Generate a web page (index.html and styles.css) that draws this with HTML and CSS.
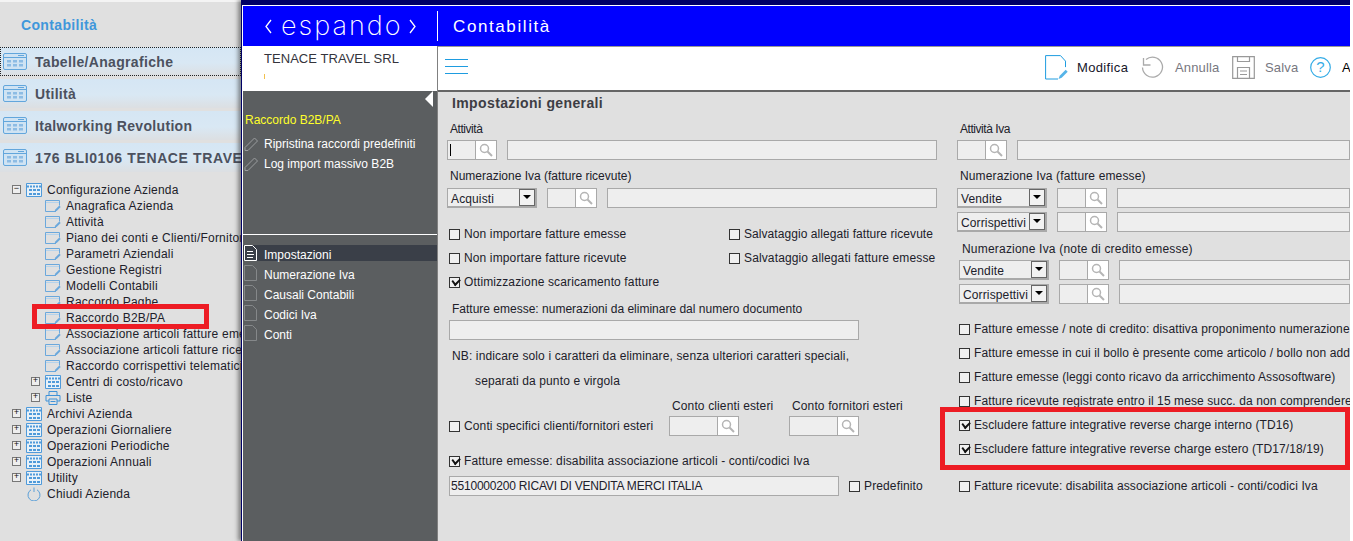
FILE: index.html
```html
<!DOCTYPE html>
<html lang="it">
<head>
<meta charset="utf-8">
<title>Contabilità</title>
<link rel="stylesheet" href="styles.css">
</head>
<body>
<svg class="sprites" width="0" height="0" aria-hidden="true">
  <symbol id="i-app" viewBox="0 0 24 17"><rect x=".5" y=".5" width="23" height="16" rx="1.5" fill="#cfe3f3" stroke="#62a6dc"/><path d="M1 4.500h22" stroke="#62a6dc"/><path d="M15 2.500h6" stroke="#62a6dc"/><g fill="#8dbce4"><rect x="4" y="7" width="4" height="2.500"/><rect x="10" y="7" width="4" height="2.500"/><rect x="16" y="7" width="4" height="2.500"/><rect x="4" y="11" width="4" height="2.500"/><rect x="10" y="11" width="4" height="2.500"/><rect x="16" y="11" width="4" height="2.500"/></g></symbol>
  <symbol id="i-grid" viewBox="0 0 16 14"><path d="M.5 13.500v-13h15v13z" fill="#e8f1f8" stroke="#4f9ada"/><path d="M1 3.500h14" stroke="#4f9ada" stroke-width="2" stroke-dasharray="2 1"/><g fill="#4f9ada"><rect x="3" y="6" width="3" height="2"/><rect x="7" y="6" width="3" height="2"/><rect x="11" y="6" width="3" height="2"/><rect x="3" y="10" width="3" height="2"/><rect x="7" y="10" width="3" height="2"/><rect x="11" y="10" width="3" height="2"/></g></symbol>
  <symbol id="i-form" viewBox="0 0 16 12"><path d="M11 11.500H.5V.5h14v5" fill="none" stroke="#6ba8dc"/><path d="M1 2.500h13" stroke="#b5d3ec"/><path d="M9.500 11.500l.8-2 4-4 1.400 1.400-4 4z" fill="#6ba8dc"/></symbol>
  <symbol id="i-print" viewBox="0 0 15 14"><path d="M3.500 4V.5h8V4M3.500 10H.5V4.500h14V10h-3" fill="none" stroke="#3f92d8"/><path d="M3.500 8h8v5.500h-8z" fill="none" stroke="#3f92d8"/><path d="M5 10.500h5" stroke="#3f92d8"/></symbol>
  <symbol id="i-power" viewBox="0 0 14 14"><path d="M4 2.800a6 6 0 1 0 6 0" fill="none" stroke="#5a9fd8"/><path d="M7 .5v4.500" stroke="#5a9fd8"/></symbol>
  <symbol id="i-pencil" viewBox="0 0 15 15"><path d="M1 11L10.500 1.500 13.500 4.500 4 14 1 14z" fill="none" stroke="#9a9c9e"/></symbol>
  <symbol id="i-doc" viewBox="0 0 13 16"><path d="M.5 15.500V.5h8l4 4v11" fill="none" stroke="#85888a"/><path d="M.5 15.500h12" stroke="#85888a"/></symbol>
  <symbol id="i-doc-on" viewBox="0 0 13 16"><path d="M.5 15.500V.5h8l4 4v11z" fill="none" stroke="#fff"/><path d="M3 6.500h6M3 9.500h7M3 12.500h6" stroke="#fff"/></symbol>
  <symbol id="i-search" viewBox="0 0 14 14"><circle cx="5.500" cy="5.500" r="4" fill="none" stroke="#b5b5b5" stroke-width="1.500"/><path d="M8.500 8.500l4.500 4.500" stroke="#b5b5b5" stroke-width="2"/></symbol>
  <symbol id="i-edit" viewBox="0 0 23 25"><path d="M13 24H.6V.6h14.900l5 5.500v6" fill="none" stroke="#1e9ce0"/><path d="M13.500 24l1.200-3.200 6-6 2 2-6 6z" fill="#56b4e8"/></symbol>
  <symbol id="i-undo" viewBox="0 0 23 23"><path d="M5 3.500A10 10 0 1 1 1.500 11.500" fill="none" stroke="#aaa" stroke-width="1.300"/><path d="M2.500 2v7h7" fill="none" stroke="#aaa" stroke-width="1.300"/></symbol>
  <symbol id="i-save" viewBox="0 0 23 23"><path d="M.7.700h21.600v21.600H.7zM5.500 1v4.500h12V1M5.500 22V11.500h12V22M8 15h7M8 18.500h7" fill="none" stroke="#999" stroke-width="1.200"/></symbol>
</svg>
<div class="app">
  <aside class="nav">
    <h1 class="nav-title">Contabilità</h1>
    <div class="acc acc-focus"><svg class="acc-icon"><use href="#i-app"/></svg><span>Tabelle/Anagrafiche</span></div>
    <div class="acc"><svg class="acc-icon"><use href="#i-app"/></svg><span>Utilità</span></div>
    <div class="acc"><svg class="acc-icon"><use href="#i-app"/></svg><span>Italworking Revolution</span></div>
    <div class="acc acc-long"><svg class="acc-icon"><use href="#i-app"/></svg><span>176 BLI0106 TENACE TRAVEL SRL</span></div>
    <ul class="tree">
      <li class="t0"><i class="tog">−</i><svg class="ti"><use href="#i-grid"/></svg>Configurazione Azienda</li>
      <li class="t1"><svg class="ti"><use href="#i-form"/></svg>Anagrafica Azienda</li>
      <li class="t1"><svg class="ti"><use href="#i-form"/></svg>Attività</li>
      <li class="t1"><svg class="ti"><use href="#i-form"/></svg>Piano dei conti e Clienti/Fornitori</li>
      <li class="t1"><svg class="ti"><use href="#i-form"/></svg>Parametri Aziendali</li>
      <li class="t1"><svg class="ti"><use href="#i-form"/></svg>Gestione Registri</li>
      <li class="t1"><svg class="ti"><use href="#i-form"/></svg>Modelli Contabili</li>
      <li class="t1"><svg class="ti"><use href="#i-form"/></svg>Raccordo Paghe</li>
      <li class="t1"><svg class="ti"><use href="#i-form"/></svg>Raccordo B2B/PA</li>
      <li class="t1"><svg class="ti"><use href="#i-form"/></svg>Associazione articoli fatture emesse</li>
      <li class="t1"><svg class="ti"><use href="#i-form"/></svg>Associazione articoli fatture ricevute</li>
      <li class="t1"><svg class="ti"><use href="#i-form"/></svg>Raccordo corrispettivi telematici</li>
      <li class="t1 tp"><i class="tog">+</i><svg class="ti"><use href="#i-grid"/></svg>Centri di costo/ricavo</li>
      <li class="t1 tp"><i class="tog">+</i><svg class="ti"><use href="#i-print"/></svg>Liste</li>
      <li class="t0"><i class="tog">+</i><svg class="ti"><use href="#i-grid"/></svg>Archivi Azienda</li>
      <li class="t0"><i class="tog">+</i><svg class="ti"><use href="#i-grid"/></svg>Operazioni Giornaliere</li>
      <li class="t0"><i class="tog">+</i><svg class="ti"><use href="#i-grid"/></svg>Operazioni Periodiche</li>
      <li class="t0"><i class="tog">+</i><svg class="ti"><use href="#i-grid"/></svg>Operazioni Annuali</li>
      <li class="t0"><i class="tog">+</i><svg class="ti"><use href="#i-grid"/></svg>Utility</li>
      <li class="t0 tn"><svg class="ti"><use href="#i-power"/></svg>Chiudi Azienda</li>
    </ul>
    <div class="mark mark-nav"></div>
  </aside>

  <section class="win">
    <header class="brand">
      <div class="logo">
        <svg class="chev" viewBox="0 0 7 15"><path d="M6 1L1 7.500 6 14" fill="none" stroke="#fff" stroke-width="1.300"/></svg>
        <span class="logo-text">espando</span>
        <svg class="chev" viewBox="0 0 7 15"><path d="M1 1l5 6.500L1 14" fill="none" stroke="#fff" stroke-width="1.300"/></svg>
      </div>
      <div class="brand-title">Contabilità</div>
    </header>
    <div class="work">
      <aside class="panel">
        <div class="company"><span>TENACE TRAVEL SRL</span><i class="tick"></i></div>
        <div class="panel-top">
          <i class="collapse"></i>
          <div class="panel-head">Raccordo B2B/PA</div>
          <div class="pitem"><svg class="pi"><use href="#i-pencil"/></svg>Ripristina raccordi predefiniti</div>
          <div class="pitem"><svg class="pi"><use href="#i-pencil"/></svg>Log import massivo B2B</div>
        </div>
        <div class="panel-list">
          <div class="pitem on"><svg class="pi pd"><use href="#i-doc-on"/></svg>Impostazioni</div>
          <div class="pitem"><svg class="pi pd"><use href="#i-doc"/></svg>Numerazione Iva</div>
          <div class="pitem"><svg class="pi pd"><use href="#i-doc"/></svg>Causali Contabili</div>
          <div class="pitem"><svg class="pi pd"><use href="#i-doc"/></svg>Codici Iva</div>
          <div class="pitem"><svg class="pi pd"><use href="#i-doc"/></svg>Conti</div>
        </div>
      </aside>
      <main class="main">
        <div class="toolbar">
          <div class="burger"><i></i><i></i><i></i></div>
          <div class="tools">
            <div class="tool"><svg class="tool-i"><use href="#i-edit"/></svg><span>Modifica</span></div>
            <div class="tool off"><svg class="tool-i"><use href="#i-undo"/></svg><span>Annulla</span></div>
            <div class="tool off"><svg class="tool-i"><use href="#i-save"/></svg><span>Salva</span></div>
            <div class="tool help"><svg class="help-i" viewBox="0 0 21 21"><circle cx="10.500" cy="10.500" r="9.800" fill="none" stroke="#35ace6" stroke-width="1.200"/><text x="10.500" y="15" text-anchor="middle" class="help-q">?</text></svg><span>Aiuto</span></div>
          </div>
        </div>
        <div class="form">
          <div class="col col-l">
            <h2 class="sect">Impostazioni generali</h2>
            <div class="lbl m7 in1 tight">Attività</div>
            <div class="fld m3 inm2">
              <div class="srch"><div class="sv caret"><i></i></div><div class="sb"><svg><use href="#i-search"/></svg></div></div>
              <div class="wide w430"></div>
            </div>
            <div class="lbl m8 in1 ls0">Numerazione Iva (fatture ricevute)</div>
            <div class="fld m4 inm2">
              <div class="sel"><span>Acquisti</span><b></b></div>
              <div class="srch"><div class="sv"></div><div class="sb"><svg><use href="#i-search"/></svg></div></div>
              <div class="wide w330"></div>
            </div>
            <div class="checks m14">
              <div class="line"><label class="ck ckw"><i class="cb"></i>Non importare fatture emesse</label><label class="ck ls1"><i class="cb"></i>Salvataggio allegati fatture ricevute</label></div>
              <div class="line"><label class="ck ckw"><i class="cb"></i>Non importare fatture ricevute</label><label class="ck"><i class="cb"></i>Salvataggio allegati fatture emesse</label></div>
              <div class="line"><label class="ck"><i class="cb on"></i>Ottimizzazione scaricamento fatture</label></div>
            </div>
            <div class="lbl m7 in3 ls0">Fatture emesse: numerazioni da eliminare dal numero documento</div>
            <div class="wide w410 m3"></div>
            <div class="lbl m8 in3">NB: indicare solo i caratteri da eliminare, senza ulteriori caratteri speciali,</div>
            <div class="lbl m9 in26">separati da punto e virgola</div>
            <div class="lbl-pair m9"><span>Conto clienti esteri</span><span>Conto fornitori esteri</span></div>
            <div class="fld m2 conti">
              <label class="ck cke"><i class="cb"></i>Conti specifici clienti/fornitori esteri</label>
              <div class="srch s70"><div class="sv"></div><div class="sb"><svg><use href="#i-search"/></svg></div></div>
              <div class="srch s70"><div class="sv"></div><div class="sb"><svg><use href="#i-search"/></svg></div></div>
            </div>
            <div class="line m13"><label class="ck"><i class="cb on"></i>Fatture emesse: disabilita associazione articoli - conti/codici Iva</label></div>
            <div class="fld m3">
              <div class="wide w390 val">5510000200 RICAVI DI VENDITA MERCI ITALIA</div>
              <label class="ck"><i class="cb"></i>Predefinito</label>
            </div>
          </div>
          <div class="col col-r">
            <div class="sect-sp"></div>
            <div class="lbl m7 in3 tight">Attività Iva</div>
            <div class="fld m3">
              <div class="srch"><div class="sv"></div><div class="sb"><svg><use href="#i-search"/></svg></div></div>
              <div class="wide grow"></div>
            </div>
            <div class="lbl m8 in3">Numerazione Iva (fatture emesse)</div>
            <div class="fld m4">
              <div class="sel"><span>Vendite</span><b></b></div>
              <div class="srch"><div class="sv"></div><div class="sb"><svg><use href="#i-search"/></svg></div></div>
              <div class="wide grow"></div>
            </div>
            <div class="fld m4">
              <div class="sel"><span>Corrispettivi</span><b></b></div>
              <div class="srch"><div class="sv"></div><div class="sb"><svg><use href="#i-search"/></svg></div></div>
              <div class="wide grow"></div>
            </div>
            <div class="lbl m9 in5 wider">Numerazione Iva (note di credito emesse)</div>
            <div class="fld m3 in2">
              <div class="sel"><span>Vendite</span><b></b></div>
              <div class="srch"><div class="sv"></div><div class="sb"><svg><use href="#i-search"/></svg></div></div>
              <div class="wide grow"></div>
            </div>
            <div class="fld m4 in2">
              <div class="sel"><span>Corrispettivi</span><b></b></div>
              <div class="srch"><div class="sv"></div><div class="sb"><svg><use href="#i-search"/></svg></div></div>
              <div class="wide grow"></div>
            </div>
            <div class="checks checks-r m13 in2">
              <div class="line"><label class="ck"><i class="cb"></i>Fatture emesse / note di credito: disattiva proponimento numerazione documento</label></div>
              <div class="line"><label class="ck"><i class="cb"></i>Fatture emesse in cui il bollo è presente come articolo / bollo non addebitato</label></div>
              <div class="line"><label class="ck"><i class="cb"></i>Fatture emesse (leggi conto ricavo da arricchimento Assosoftware)</label></div>
              <div class="line"><label class="ck"><i class="cb"></i>Fatture ricevute registrate entro il 15 mese succ. da non comprendere nel periodo</label></div>
              <div class="line"><label class="ck"><i class="cb on"></i>Escludere fatture integrative reverse charge interno (TD16)</label></div>
              <div class="line"><label class="ck"><i class="cb on"></i>Escludere fatture integrative reverse charge estero (TD17/18/19)</label></div>
              <div class="line m13"><label class="ck"><i class="cb"></i>Fatture ricevute: disabilita associazione articoli - conti/codici Iva</label></div>
            </div>
          </div>
        </div>
      </main>
    </div>
  </section>
  <div class="mark mark-form"></div>
</div>
</body>
</html>
```
FILE: styles.css
```css
* { box-sizing: border-box; }
html, body { margin: 0; padding: 0; background: #fff; overflow: hidden; }
body { font: 12px/16px "Liberation Sans", Arial, sans-serif; color: #20202a; }
.sprites { position: absolute; }
.app { position: relative; display: flex; width: 1350px; height: 541px; overflow: hidden; }

/* left navigation */
.nav { position: relative; flex: 0 0 241px; width: 241px; height: 541px; overflow: hidden; background: #e0e0e0; border-top: 2px solid #f4f4f4; }
.nav-title { margin: 0 0 0 21px; height: 45px; font-size: 14px; font-weight: bold; line-height: 46px; color: #3f97db; letter-spacing: .35px; }
.acc { display: flex; align-items: center; gap: 8px; height: 29px; margin-bottom: 3px; padding-left: 3px; font-size: 14px; font-weight: bold; white-space: nowrap; color: #4c515e; letter-spacing: .33px; background: linear-gradient(#d5e6f4, #d9e8f4 55%, #dcdfe2); }
.acc-long { letter-spacing: .62px; }
.acc-focus { outline: 1px dotted #222; outline-offset: -1px; }
.acc-icon { flex: none; width: 24px; height: 17px; }
.tree { list-style: none; margin: 10px 0 0; padding: 0; letter-spacing: .22px; }
.tree li { position: relative; height: 16px; line-height: 16px; white-space: nowrap; }
.t0 { padding-left: 47px; }
.t1 { padding-left: 66px; }
.ti { position: absolute; top: 1px; width: 16px; height: 14px; }
.t0 .ti { left: 26px; }
.t1 .ti { left: 45px; }
.tog { position: absolute; top: 3px; width: 9px; height: 9px; border: 1px solid #777; background: #eee; color: #111; font: 9px/7px "Liberation Mono", monospace; letter-spacing: 0; text-align: center; font-style: normal; }
.t0 .tog { left: 12px; }
.t1 .tog { left: 31px; }

/* red highlights */
.mark { position: absolute; border: 5px solid #ed1c24; pointer-events: none; }
.mark-nav { left: 32px; top: 302px; width: 177px; height: 25px; }
.mark-form { left: 940px; top: 407px; width: 410px; height: 63px; }

/* window */
.win { flex: 1; min-width: 0; display: flex; flex-direction: column; height: 541px; background: #000066; box-shadow: -3px 0 4px rgba(40, 40, 40, .5); padding-left: 1px; position: relative; }
.brand { display: flex; align-items: center; flex: none; height: 41px; margin-top: 5px; padding-left: 1px; background: #0000ff; border-top: 1px solid #fff; border-left: 1px solid #fff; color: #fff; }
.logo { display: flex; align-items: center; width: 194px; height: 30px; padding-left: 21px; border-right: 1px solid #fff; }
.chev { flex: none; width: 7px; height: 15px; }
.logo-text { margin: 0 8px 0 9px; width: 120px; font: 200 27px/30px Inter, "Open Sans", sans-serif; letter-spacing: 2px; white-space: nowrap; }
.brand-title { margin: 2px 0 0 15px; font-size: 17px; letter-spacing: 1.6px; }
.work { flex: 1; min-height: 0; display: flex; border-left: 1px solid #fff; background: #5b5e60; }

/* side panel */
.panel { flex: 0 0 194px; width: 194px; display: flex; flex-direction: column; color: #fff; }
.company { position: relative; height: 45px; padding: 5px 0 0 21px; background: #fff; color: #34343c; font-size: 13px; letter-spacing: .05px; line-height: 16px; }
.tick { position: absolute; left: 21px; top: 28px; width: 1px; height: 5px; background: #f2c14e; }
.panel-top { position: relative; height: 144px; padding-top: 21px; border-bottom: 1px solid #fff; }
.collapse { position: absolute; right: 4px; top: 0; border-style: solid; border-width: 8px 8px 8px 0; border-color: transparent #fff transparent transparent; }
.panel-head { height: 16px; margin: 0 0 6px 2px; color: #ffff2a; }
.pitem { display: flex; align-items: center; height: 20px; padding-left: 21px; position: relative; }
.pi { position: absolute; left: 1px; top: 2px; width: 15px; height: 16px; }
.pd { left: 0; top: 0; }
.panel-list { padding-top: 10px; }
.pitem.on { background: linear-gradient(#3a3f48, #3a3f48) 0 0 / 100% 16px no-repeat; }

/* toolbar */
.main { flex: 1; min-width: 0; display: flex; flex-direction: column; background: #e0e0e0; border-left: 1px solid #808080; overflow: hidden; }
.toolbar { flex: none; display: flex; align-items: center; justify-content: space-between; height: 46px; background: #fff; border-top: 1px solid #999; border-bottom: 2px solid #666; padding: 0 0 2px 7px; }
.burger { display: flex; flex-direction: column; gap: 6px; width: 23px; margin-bottom: 2px; }
.burger i { display: block; height: 1px; background: #1e9ce0; }
.tools { display: flex; width: 305px; flex: none; font-size: 13px; letter-spacing: .15px; }
.tool { display: flex; align-items: center; gap: 10px; color: #16162a; white-space: nowrap; flex: none; }
.tool.off { color: #77777f; }
.tool:nth-child(1) { width: 96px; gap: 9px; letter-spacing: .35px; }
.tool:nth-child(2) { width: 91px; gap: 11px; }
.tool:nth-child(3) { width: 78px; }
.tool-i { width: 23px; height: 25px; }
.help { gap: 11px; color: #000; }
.help-i { width: 21px; height: 21px; }
.help-q { font: 15px "Liberation Sans", sans-serif; fill: #35ace6; }

/* form */
.form { flex: 1; min-height: 0; display: flex; letter-spacing: .13px; }
.col { display: flex; flex-direction: column; flex: none; }
.col-l { width: 519px; padding-left: 11px; }
.col-r { flex: 1; min-width: 0; }
.sect { margin: 0; height: 22px; padding-left: 3px; font-size: 14px; font-weight: bold; line-height: 22px; color: #3d3d44; letter-spacing: .38px; }
.sect-sp { height: 22px; }
.lbl { height: 16px; white-space: nowrap; }
.ls0 { letter-spacing: 0; }
.ls1 { letter-spacing: .06px; }
.tight { letter-spacing: -.45px; }
.wider { letter-spacing: .2px; }
.m2 { margin-top: 2px; } .m3 { margin-top: 3px; } .m4 { margin-top: 4px; } .m7 { margin-top: 7px; } .m8 { margin-top: 8px; } .m9 { margin-top: 9px; } .m13 { margin-top: 13px; } .m14 { margin-top: 14px; }
.in1 { margin-left: 1px; } .in2 { margin-left: 2px; } .in3 { margin-left: 3px; } .in5 { margin-left: 5px; } .in26 { margin-left: 26px; } .inm2 { margin-left: -2px; }
.fld { display: flex; align-items: center; gap: 10px; height: 20px; flex: none; white-space: nowrap; }
.srch { display: flex; flex: none; width: 50px; height: 20px; border: 1px solid #a9a9a9; background: #fff; }
.sv { flex: 1; background: #eee; border-right: 1px solid #a9a9a9; position: relative; }
.caret i { position: absolute; left: 2px; top: 3px; width: 1px; height: 12px; background: #000; }
.sb { flex: 0 0 20px; display: flex; align-items: center; justify-content: center; }
.sb svg { width: 14px; height: 14px; }
.wide { flex: none; height: 20px; border: 1px solid #a9a9a9; background: #eee; }
.w430 { width: 430px; } .w330 { width: 330px; } .w410 { width: 410px; } .w390 { width: 390px; }
.grow { flex: 1; min-width: 0; }
.val { padding-left: 1px; line-height: 18px; letter-spacing: -.2px; white-space: nowrap; overflow: hidden; }
.sel { display: flex; align-items: center; justify-content: space-between; flex: none; width: 90px; height: 20px; padding-left: 3px; border: 2px solid #a9a9a9; border-width: 1px 2px 2px 1px; background: #eee; }
.sel span { position: relative; top: 1px; }
.sel b { flex: none; position: relative; width: 16px; height: 17px; border: 1px solid #666; background: #f2f2f2; }
.sel b::after { content: ""; position: absolute; left: 3px; top: 5px; border-style: solid; border-width: 4px 4px 0; border-color: #000 transparent transparent; }
.checks { display: flex; flex-direction: column; }
.checks-r { letter-spacing: .1px; }
.line { display: flex; align-items: center; height: 24px; flex: none; white-space: nowrap; }
.ck { display: flex; align-items: center; gap: 4px; white-space: nowrap; }
.ckw { width: 280px; }
.cb { position: relative; flex: none; width: 11px; height: 11px; border: 1px solid #333; background: #f0f0f0; }
.cb.on::after { content: ""; position: absolute; left: 1.500px; top: .5px; width: 6px; height: 3.500px; border-left: 2px solid #111; border-bottom: 2px solid #111; transform: rotate(-45deg) skewX(-8deg); }
.lbl-pair { display: flex; height: 16px; padding-left: 223px; white-space: nowrap; }
.lbl-pair span:first-child { width: 120px; }
.conti { gap: 0; }
.cke { width: 220px; }
.s70 { width: 70px; margin-right: 50px; }
```
